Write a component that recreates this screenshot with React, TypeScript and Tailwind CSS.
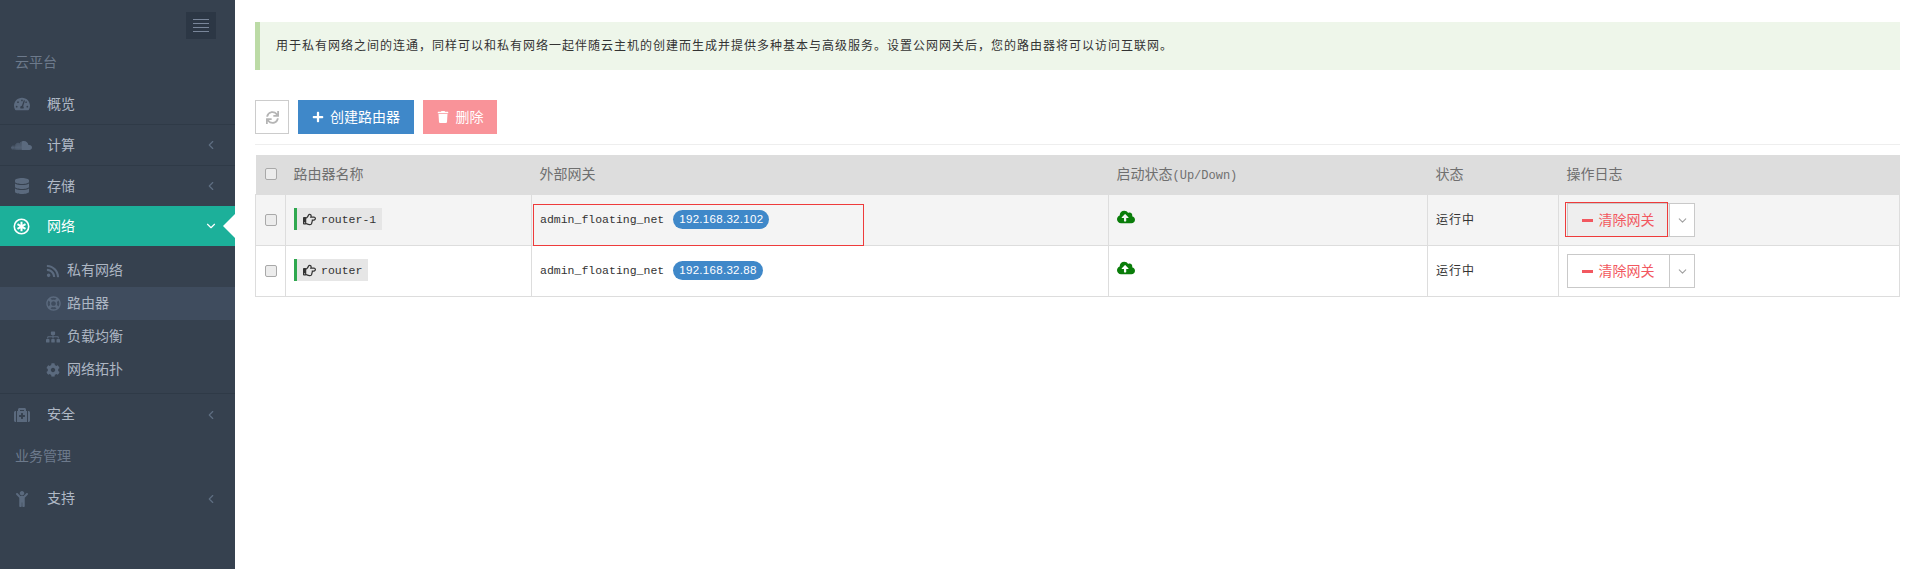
import { FaTachometerAlt, FaSoundcloud, FaDatabase, FaRegLifeRing, FaRss, FaSitemap, FaCog, FaMedkit, FaChild, FaRegHandPointRight, FaCloudUploadAlt, FaTrash, FaSync, FaPlus } from "react-icons/fa";
import { LuChevronLeft, LuChevronDown } from "react-icons/lu";
import type { ReactNode } from "react";

const cjk = "font-['Liberation_Sans','Noto_Sans_CJK_SC',sans-serif]";
const mono = "font-['Liberation_Mono','Noto_Sans_CJK_SC',monospace]";

function NetIcon() {
  return (
    <svg viewBox="0 0 16 16" className="w-[17px] h-[17px]" fill="none" stroke="white">
      <circle cx="8" cy="8" r="6.8" strokeWidth="1.5" />
      <path d="M8 3.6v8.8M4.2 5.8l7.6 4.4M11.8 5.8l-7.6 4.4" strokeWidth="1.9" />
    </svg>
  );
}

function NavItem({ icon, label, chevron, border, h = "h-[41px]" }: { icon: ReactNode; label: string; chevron?: boolean; border?: boolean; h?: string }) {
  return (
    <div className={`flex items-center ${h} ${border ? "border-b border-[#2f3a47]" : ""}`}>
      <span className="w-[47px] flex justify-center pl-[3px] pr-[7px] text-[#5b6a7e] text-[16px]">{icon}</span>
      <span className="flex-1 text-[14px] text-[#b0b9c6]">{label}</span>
      {chevron && <LuChevronLeft className="mr-[17px] text-[#5f6e82] text-[14px]" />}
    </div>
  );
}

function SubItem({ icon, label, active }: { icon: ReactNode; label: string; active?: boolean }) {
  return (
    <div className={`flex items-center h-[33px] pl-[46px] ${active ? "bg-[#3f4c5e]" : ""}`}>
      <span className="w-[21px] text-[#5b6a7e] text-[14px]">{icon}</span>
      <span className="text-[14px] text-[#adb6c3]">{label}</span>
    </div>
  );
}

function Sidebar() {
  return (
    <aside className="w-[235px] shrink-0 bg-[#36414f] min-h-[569px] flex flex-col">
      <div className="flex justify-end pt-3 pr-[19px]">
        <div className="w-[30px] h-[27px] bg-[#2c3745] flex flex-col items-center justify-center gap-[3px]">
          <span className="w-4 h-px bg-[#79869a]" />
          <span className="w-4 h-px bg-[#79869a]" />
          <span className="w-4 h-px bg-[#79869a]" />
          <span className="w-4 h-px bg-[#79869a]" />
        </div>
      </div>
      <div className="pl-[15px] mt-[11px] h-[24px] flex items-center text-[14px] text-[#6d7a8c]">云平台</div>
      <div className="mt-[10px]" />
      <NavItem icon={<FaTachometerAlt />} label="概览" border />
      <NavItem icon={<FaSoundcloud className="text-[21px]" />} label="计算" chevron border />
      <NavItem icon={<FaDatabase />} label="存储" chevron h="h-[40px]" />
      <div className="relative flex items-center h-[40px] bg-[#1cb09a]">
        <span className="w-[47px] flex justify-center pl-[3px] pr-[7px]"><NetIcon /></span>
        <span className="flex-1 text-[14px] text-white">网络</span>
        <LuChevronDown className="mr-[17px] text-white text-[14px]" />
        <span className="absolute right-0 top-[8px] w-0 h-0 border-y-[12px] border-y-transparent border-r-[12px] border-r-white" />
      </div>
      <div className="h-[8px]" />
      <SubItem icon={<FaRss />} label="私有网络" />
      <SubItem icon={<FaRegLifeRing className="text-[15px]" />} label="路由器" active />
      <SubItem icon={<FaSitemap />} label="负载均衡" />
      <SubItem icon={<FaCog />} label="网络拓扑" />
      <div className="h-[8px] border-b border-[#2f3a47]" />
      <NavItem icon={<FaMedkit />} label="安全" chevron />
      <div className="pl-[15px] h-[43px] flex items-center text-[14px] text-[#6d7a8c]">业务管理</div>
      <NavItem icon={<FaChild />} label="支持" chevron />
    </aside>
  );
}

function ActionButton({ outlined }: { outlined?: boolean }) {
  return (
    <div className="relative inline-flex h-[34px] mt-[1px]">
      <div className={`w-[103px] border border-[#c9c9c9] flex items-center justify-center gap-[6px] pr-[1px] text-[14px] text-[#f25860] ${outlined ? "bg-[#eeeeee]" : "bg-white"}`}>
        <span className="w-[11px] h-[3px] bg-[#f25860]" />
        <span>清除网关</span>
      </div>
      <div className="w-[26px] -ml-px border border-[#c9c9c9] bg-white flex items-center justify-center text-[#a0a0a0]">
        <LuChevronDown className="text-[13px]" />
      </div>
      {outlined && <span className="absolute -left-[2px] -top-[1px] w-[103px] h-[35px] border border-[#ee3b3b]" />}
    </div>
  );
}

function Row({ name, ip, striped, highlight }: { name: string; ip: string; striped?: boolean; highlight?: boolean }) {
  return (
    <tr className={`h-[51px] ${striped ? "bg-[#f4f4f4]" : "bg-white"}`}>
      <td className="border border-[#dddddd] pl-[9px] align-middle">
        <span className="block w-[12px] h-[12px] rounded-[2px] border border-[#a9a9a9] bg-[#ececec]" />
      </td>
      <td className="border border-[#dddddd] pl-[8px] align-middle">
        <span className={`inline-flex items-center h-[22px] mt-[2px] pl-[6px] pr-[6px] border-l-[3px] border-[#2fa84f] bg-[#e6e6e6] gap-[5px] text-[11.5px] text-[#333333] ${mono}`}>
          <FaRegHandPointRight className="text-[13px]" />
          {name}
        </span>
      </td>
      <td className="relative border border-[#dddddd] pl-[8px] align-middle">
        <div className="flex items-center gap-[9px]">
          <span className={`text-[11.5px] text-[#333333] ${mono}`}>admin_floating_net</span>
          <span className={`inline-flex items-center h-[19px] px-[6px] rounded-full bg-[#3f88c9] text-white text-[11.5px] tracking-[0.3px] ${cjk}`}>{ip}</span>
        </div>
        {highlight && <span className="absolute left-[1px] top-[9px] w-[331px] h-[42px] border border-[#ee3b3b]" />}
      </td>
      <td className="border border-[#dddddd] pl-[8px] align-middle">
        <FaCloudUploadAlt className="text-[18px] text-[#0a7d0a] -mt-[5px]" />
      </td>
      <td className="border border-[#dddddd] pl-[8px] align-middle text-[12px] tracking-[1px] text-[#333333]">运行中</td>
      <td className="border border-[#dddddd] pl-[8px] align-middle">
        <ActionButton outlined={highlight} />
      </td>
    </tr>
  );
}

export default function App() {
  return (
    <div className={`flex w-[1920px] min-h-[569px] bg-white overflow-hidden ${cjk}`}>
      <Sidebar />
      <main className="flex-1 pl-[20px] pr-[20px] pt-[22px]">
        <div className="h-[48px] bg-[#eef6ea] border-l-[5px] border-[#bcdba6] flex items-center pl-[16px] text-[12px] tracking-[1px] text-[#333333]">
          用于私有网络之间的连通，同样可以和私有网络一起伴随云主机的创建而生成并提供多种基本与高级服务。设置公网网关后，您的路由器将可以访问互联网。
        </div>
        <div className="flex mt-[30px] gap-[9px] pb-[10px] border-b-[1px] border-[#eeeeee] h-[45px]">
          <button className="w-[34px] h-[34px] border border-[#cccccc] bg-white flex items-center justify-center text-[#b5b5b5] text-[13px]"><FaSync /></button>
          <button className="w-[116px] h-[34px] bg-[#3f88c9] text-white text-[14px] flex items-center justify-center gap-[6px]"><FaPlus className="text-[12px]" />创建路由器</button>
          <button className="w-[74px] h-[34px] bg-[#f99399] text-white text-[14px] flex items-center justify-center gap-[7px]"><FaTrash className="text-[12px]" />删除</button>
        </div>
        <table className="mt-[10px] w-[1645px] border-collapse table-fixed">
          <colgroup>
            <col className="w-[30px]" />
            <col className="w-[246px]" />
            <col className="w-[577px]" />
            <col className="w-[319px]" />
            <col className="w-[131px]" />
            <col />
          </colgroup>
          <thead>
            <tr className="h-[39px] bg-[#dddddd] text-left text-[14px] font-normal text-[#6f6f6f]">
              <th className="pl-[9px] font-normal"><span className="block w-[12px] h-[12px] rounded-[2px] border border-[#a9a9a9] bg-[#ececec]" /></th>
              <th className="pl-[8px] font-normal">路由器名称</th>
              <th className="pl-[8px] font-normal">外部网关</th>
              <th className="pl-[8px] font-normal">启动状态<span className={`text-[12px] ${mono}`}>(Up/Down)</span></th>
              <th className="pl-[8px] font-normal">状态</th>
              <th className="pl-[8px] font-normal">操作日志</th>
            </tr>
          </thead>
          <tbody>
            <Row name="router-1" ip="192.168.32.102" striped highlight />
            <Row name="router" ip="192.168.32.88" />
          </tbody>
        </table>
      </main>
    </div>
  );
}
